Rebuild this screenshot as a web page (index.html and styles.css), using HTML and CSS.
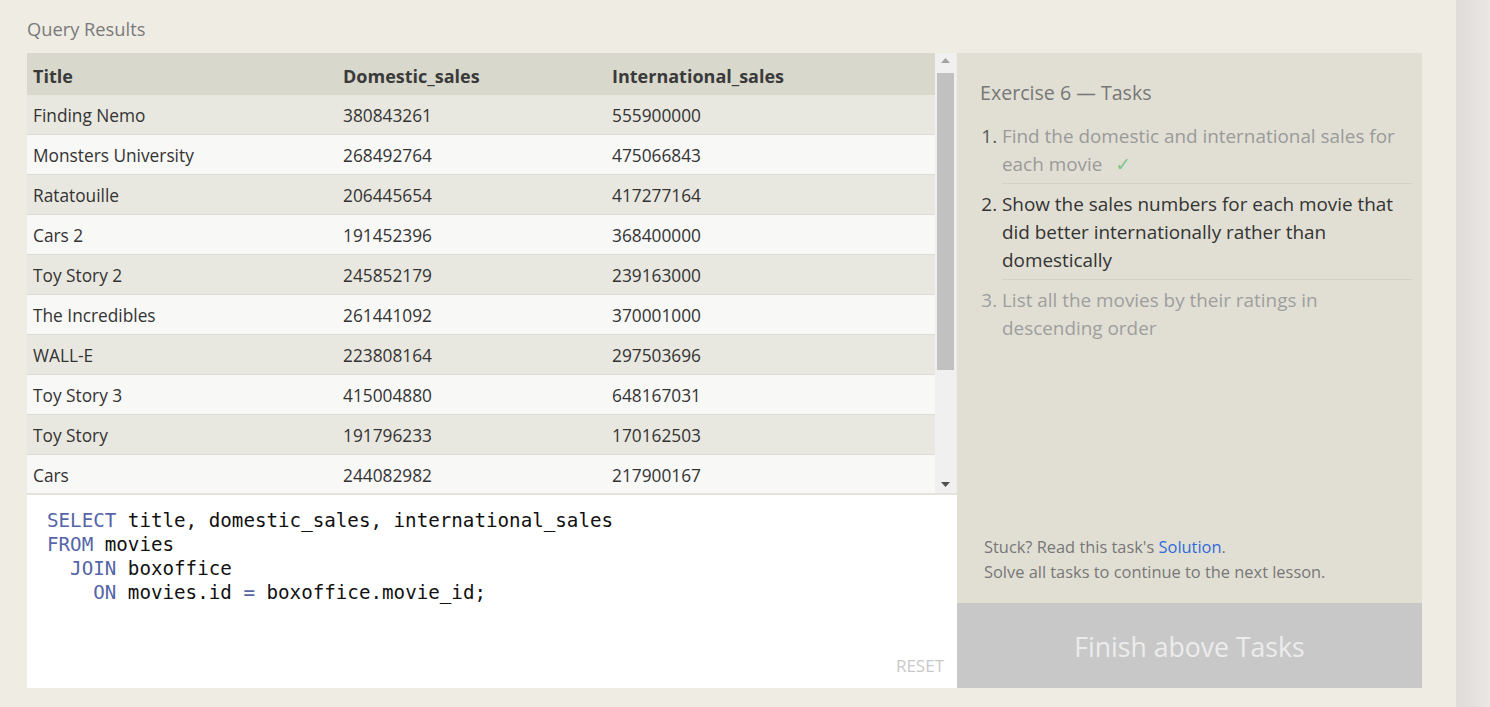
FILE: index.html
```html
<!DOCTYPE html>
<html lang="en">
<head>
<meta charset="utf-8">
<title>Query Results</title>
<link rel="stylesheet" href="styles.css">
</head>
<body>
<div class="page">
  <main class="main">
    <h2 class="section-title">Query Results</h2>
    <div class="workspace">
      <div class="left">
        <div class="results">
          <div class="table">
            <div class="row head"><div>Title</div><div>Domestic_sales</div><div>International_sales</div></div>
            <div class="row"><div>Finding Nemo</div><div>380843261</div><div>555900000</div></div>
            <div class="row"><div>Monsters University</div><div>268492764</div><div>475066843</div></div>
            <div class="row"><div>Ratatouille</div><div>206445654</div><div>417277164</div></div>
            <div class="row"><div>Cars 2</div><div>191452396</div><div>368400000</div></div>
            <div class="row"><div>Toy Story 2</div><div>245852179</div><div>239163000</div></div>
            <div class="row"><div>The Incredibles</div><div>261441092</div><div>370001000</div></div>
            <div class="row"><div>WALL-E</div><div>223808164</div><div>297503696</div></div>
            <div class="row"><div>Toy Story 3</div><div>415004880</div><div>648167031</div></div>
            <div class="row"><div>Toy Story</div><div>191796233</div><div>170162503</div></div>
            <div class="row"><div>Cars</div><div>244082982</div><div>217900167</div></div>
          </div>
          <div class="scrollbar">
            <svg class="arrow" width="21" height="17" viewBox="0 0 21 17"><polygon points="6,10 15,10 10.5,5" fill="#a3a3a3"/></svg>
            <div class="thumb-track"><div class="thumb"></div></div>
            <svg class="arrow" width="21" height="17" viewBox="0 0 21 17"><polygon points="6,6 15,6 10.5,11" fill="#505050"/></svg>
          </div>
        </div>
        <div class="editor">
          <div class="code">
            <div class="line"><span class="kw">SELECT</span> title, domestic_sales, international_sales</div>
            <div class="line"><span class="kw">FROM</span> movies</div>
            <div class="line indent-1"><span class="kw">JOIN</span> boxoffice</div>
            <div class="line indent-2"><span class="kw">ON</span> movies.id <span class="kw">=</span> boxoffice.movie_id;</div>
          </div>
          <div class="reset">RESET</div>
        </div>
      </div>
      <aside class="right">
        <div class="tasks">
          <h3 class="tasks-title">Exercise 6 — Tasks</h3>
          <ol class="task-list">
            <li class="done"><span>Find the domestic and international sales for</span> <span>each movie</span> <span class="check">✓</span></li>
            <li class="active">Show the sales numbers for each movie that did better internationally rather than domestically</li>
            <li class="todo">List all the movies by their ratings in descending order</li>
          </ol>
          <div class="help">
            <div>Stuck? Read this task's <a href="#" class="link">Solution</a>.</div>
            <div>Solve all tasks to continue to the next lesson.</div>
          </div>
        </div>
        <div class="finish">Finish above Tasks</div>
      </aside>
    </div>
  </main>
  <div class="side-strip"></div>
</div>
</body>
</html>
```
FILE: styles.css
```css
* { box-sizing: border-box; }
html, body { margin: 0; padding: 0; }
body {
  background: #efece4;
  font-family: "Open Sans", "Noto Sans", sans-serif;
  color: #333;
  height: 707px;
  overflow: hidden;
}
.page { display: flex; height: 707px; }
.main { width: 1456px; padding: 17px 0 0 27px; }
.side-strip { flex: 1; background: linear-gradient(to right, #dfdbd8, #ebe7e4); }

.section-title {
  margin: 0 0 12px 0;
  font-size: 18.3px;
  line-height: 24px;
  font-weight: 400;
  color: #7a7a7a;
}

.workspace { display: flex; width: 1395px; height: 635px; }
.left { width: 930px; display: flex; flex-direction: column; }
.right { width: 465px; display: flex; flex-direction: column; }

.results { display: flex; height: 442px; border-bottom: 2px solid #e4e2d9; overflow: hidden; }
.table { width: 908px; }
.row {
  display: grid;
  grid-template-columns: 310px 269px 1fr;
  height: 40px;
  padding-top: 2px;
  align-items: center;
  border-bottom: 1px solid #dcdbd5;
  font-size: 17.3px;
  color: #333;
  background: #e9e8e0;
}
.row > div { padding-left: 6px; white-space: nowrap; }
.row:nth-child(odd) { background: #f8f8f6; }
.row.head {
  height: 42px;
  padding-top: 3px;
  background: #d9d8cc;
  font-weight: 700;
  font-size: 18px;
  border-bottom: 0;
  color: #3a3a3a;
}
.scrollbar {
  width: 21px;
  background: #f0f0f0;
  display: flex;
  flex-direction: column;
}
.arrow { display: block; flex: none; }
.thumb-track { flex: 1; padding: 3px 2px 0 2px; }
.thumb { height: 297px; background: #c1c1c1; }

.editor {
  flex: 1;
  background: #fff;
  display: flex;
  flex-direction: column;
  padding: 14px 14px 11px 20px;
}
.code {
  font-family: "DejaVu Sans Mono", "Liberation Mono", monospace;
  font-size: 19.2px;
  line-height: 24px;
  color: #111;
  flex: 1;
}
.line { white-space: pre; }
.indent-1 { padding-left: 2ch; }
.indent-2 { padding-left: 4ch; }
.kw { color: #5565a8; }
.reset {
  align-self: flex-end;
  font-size: 17px;
  color: #c9c9c9;
  line-height: 22px;
  margin-right: -1px;
}

.tasks {
  flex: 1;
  background: #e1dfd4;
  padding: 27px 10px 19px 23px;
  display: flex;
  flex-direction: column;
}
.tasks-title {
  margin: 0 0 10px 0;
  font-size: 19.6px;
  line-height: 26px;
  font-weight: 400;
  color: #777;
}
.task-list {
  margin: 0 0 0 22px;
  padding: 0;
  list-style: decimal outside;
  font-size: 18.9px;
  line-height: 28px;
}
.task-list li {
  padding: 6px 0 5px 0;
  border-bottom: 1px solid #d3d1c5;
}
.task-list li:last-child { border-bottom: 0; }
.task-list li.done { color: #9a9a9a; }
.task-list li.active { color: #333; }
.task-list li.todo { color: #9e9e9e; }
.task-list li.done::marker { color: #555; }
.task-list li.active::marker { color: #333; }
.check { color: #7cc68c; margin-left: 8px; font-family: "DejaVu Sans", sans-serif; }

.help {
  margin-top: auto;
  font-size: 16.4px;
  line-height: 25px;
  color: #777;
  padding-left: 4px;
}
.link { color: #2f6ad9; text-decoration: none; }

.finish {
  height: 85px;
  padding-top: 3px;
  background: #c8c8c8;
  color: #ececec;
  font-size: 26.6px;
  display: flex;
  align-items: center;
  justify-content: center;
}
```
